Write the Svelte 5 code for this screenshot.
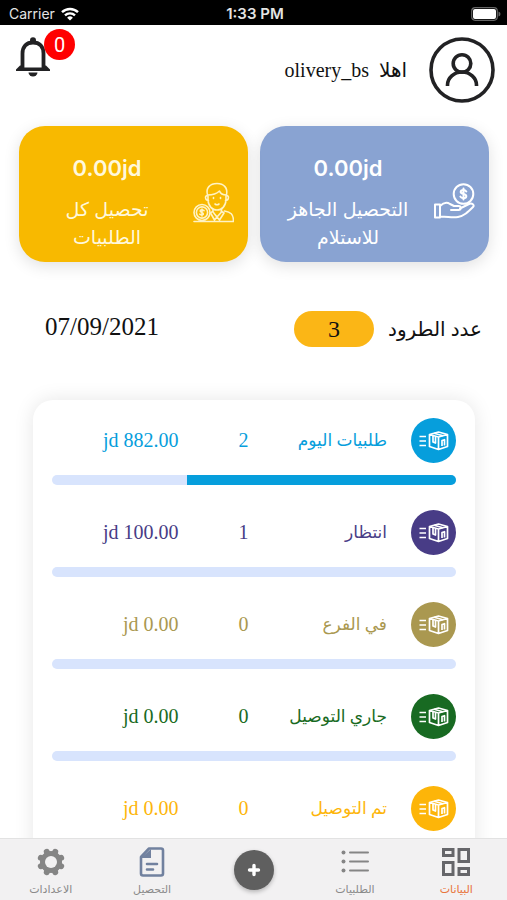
<script lang="ts">
	type Status = {
		label: string;
		count: number;
		amount: string;
		percent: number;
		color: string;
	};

	let username = 'olivery_bs';
	let date = '07/09/2021';
	let notifications = 0;
	let parcels = 3;

	let statuses: Status[] = [
		{ label: 'طلبيات اليوم', count: 2, amount: '882.00', percent: 66.7, color: '#069edc' },
		{ label: 'انتظار', count: 1, amount: '100.00', percent: 0, color: '#483c86' },
		{ label: 'في الفرع', count: 0, amount: '0.00', percent: 0, color: '#aa9850' },
		{ label: 'جاري التوصيل', count: 0, amount: '0.00', percent: 0, color: '#186a22' },
		{ label: 'تم التوصيل', count: 0, amount: '0.00', percent: 0, color: '#fdb509' }
	];
</script>

<div class="app" dir="rtl">
	<div class="status-bar" dir="ltr">
		<span class="carrier">
			Carrier
			<svg width="18" height="14" viewBox="0 0 18 14" fill="none" stroke="#fff" stroke-width="2.4">
				<path d="M1 5.2a11.5 11.5 0 0 1 16 0M4 8.4a7.3 7.3 0 0 1 10 0" />
				<path d="M9 13.6 6.1 10.7a4.2 4.2 0 0 1 5.8 0z" fill="#fff" stroke="none" />
			</svg>
		</span>
		<span class="clock">1:33 PM</span>
		<svg class="battery" width="30" height="14" viewBox="0 0 30 14">
			<rect x="0.7" y="0.7" width="25.6" height="12.6" rx="3.5" fill="none" stroke="#666" stroke-width="1.2" />
			<rect x="2" y="2" width="23" height="10" rx="2" fill="#fff" />
			<path d="M27.5 4.5q2 .5 2 2.5t-2 2.5z" fill="#666" />
		</svg>
	</div>

	<main>
		<header>
			<a class="profile" href="#profile">
				<svg width="66" height="66" viewBox="0 0 66 66" fill="none" stroke="#222224" stroke-width="3.6">
					<circle cx="33" cy="33" r="31" />
					<circle cx="33" cy="26.5" r="8.8" />
					<path d="M18.5 49v-1a14.5 13 0 0 1 29 0v1" />
				</svg>
				<span>اهلا</span>
				<span>{username}</span>
			</a>
			<button class="bell" aria-label="الاشعارات">
				<svg width="34" height="40" viewBox="0 0 34 40">
					<path
						d="M6.5 31V16.5C6.5 9.5 10.5 5.5 17 5.5s10.5 4 10.5 11V31"
						fill="none"
						stroke="#222224"
						stroke-width="3.8"
					/>
					<circle cx="17" cy="3.2" r="3" fill="#222224" />
					<path d="M0 34v-1.5l4-4h3v2h20v-2h3l4 4V34z" fill="#222224" />
					<path d="M12.5 35.500h9a4.5 4 0 0 1-9 0z" fill="#222224" />
				</svg>
				<span class="badge">{notifications}</span>
			</button>
		</header>

		<section class="cards">
			<a class="card ready" href="#ready">
				<svg width="41" height="41" viewBox="0 0 41 41" fill="none" stroke="#fff" stroke-width="2" stroke-linejoin="round" stroke-linecap="round">
					<circle cx="29.5" cy="12" r="9.8" />
					<path d="M32.3 9.5q-1-1.600-2.800-1.600-2.800 0-2.800 2c0 2.800 5.600 1.500 5.600 4.300q0 2-2.900 2-2.200 0-3-1.600M29.500 6.500v11" />
					<path d="M1 22.500h5v13H1zM6 24c3-3 7-4 10-2l4 2h4.500c3 0 3 4 0 4H17M26 26.500l9-4.500c3-1.500 6 1 4 3-5 5-9 9-15 10-6 1-10-.5-18-.5" />
				</svg>
				<div class="card-text">
					<strong>0.00jd</strong>
					<span>التحصيل الجاهز للاستلام</span>
				</div>
			</a>
			<a class="card total" href="#total">
				<svg width="41" height="41" viewBox="0 0 41 41" fill="none" stroke="#fff3c4" stroke-width="1.6" stroke-linejoin="round" stroke-linecap="round">
					<path d="M14.5 13C12.5 6 17 1.500 24 1.500S35 6 33.500 13M14.500 13c5 0 9-1 12-4 1 3 3 4 7 4M15 14v3c0 7 4 11 9 11s9-4 9-11v-3M14.500 13.500c-3 0-2.500 5 1 5M33.500 13.500c3 0 2.500 5-1 5" />
					<path d="M20.500 15.500v1M27.500 15.500v1M22 22q2 1.500 4 0" />
					<path d="M20 27v3l4 5 4.500-5v-3M20 29l-2.500 2 4 7 2.500-3 2.500 3 4.500-7-3-2M31.500 29c6 1 9 3 9 10.500H1" />
					<circle cx="9" cy="30.500" r="8" />
					<circle cx="9" cy="30.500" r="5.600" />
					<path d="M11 28.700q-2-1.700-3.500-.5c-1.500 2 3.500 2 2.800 4q-1.300 1.600-3.500 0M9 27v7" />
				</svg>
				<div class="card-text">
					<strong>0.00jd</strong>
					<span>تحصيل كل الطلبيات</span>
				</div>
			</a>
		</section>

		<section class="summary">
			<h2>عدد الطرود</h2>
			<span class="pill">{parcels}</span>
			<time>{date}</time>
		</section>

		<section class="panel">
			{#each statuses as status}
				<div class="status" style:color={status.color}>
					<div class="row">
						<svg width="45" height="45" viewBox="0 0 45 45" fill="none" stroke="#fff" stroke-width="1.7" stroke-linejoin="round">
							<circle cx="22.5" cy="22.5" r="22.5" fill="currentColor" stroke="none" />
							<path d="M8.5 18.500h6.500M8.500 23h6.500M8.500 27.500h6.500" stroke-width="1.5" />
							<path d="m18.500 16.500 9-2.500 9 2.500V28.500l-9 3-9-3zM18.500 16.500l9 2.500 9-2.500M27.500 19v12.500" />
							<path d="M22 18v6l2.500 1v-6.500M31 28v-5.500l2.500-.8V27.500M23 15.200l9 2.500" />
						</svg>
						<span class="label">{status.label}</span>
						<span class="count">{status.count}</span>
						<span class="amount"><bdi dir="ltr">jd {status.amount}</bdi></span>
					</div>
					<div class="track">
						<div class="fill" style:width="{status.percent}%"></div>
					</div>
				</div>
			{/each}
		</section>
	</main>

	<nav>
		<a class="active" href="#data">
			<svg width="30" height="30" viewBox="0 0 30 30" fill="none" stroke="#66666a" stroke-width="3">
				<path d="M2.500 2.500h9.500v6H2.500zM18 2.500h9.500v12H18zM2.500 15.500h9.500v12H2.500zM18 21.500h9.500v6H18z" />
			</svg>
			<span>البيانات</span>
		</a>
		<a href="#orders">
			<svg width="30" height="30" viewBox="0 0 30 30" fill="#858585">
				<circle cx="3.5" cy="5.5" r="2" />
				<circle cx="3.5" cy="14.5" r="2" />
				<circle cx="3.5" cy="23.5" r="2" />
				<path d="M10 5.500h18M10 14.500h18M10 23.500h18" stroke="#858585" stroke-width="2" stroke-linecap="round" />
			</svg>
			<span>الطلبيات</span>
		</a>
		<button class="add" aria-label="اضافة">
			<svg width="40" height="40" viewBox="0 0 40 40">
				<path d="M20 15.500v9M15.500 20h9" stroke="#fff" stroke-width="3.4" stroke-linecap="round" />
			</svg>
		</button>
		<a href="#collect">
			<svg width="30" height="30" viewBox="0 0 30 30" fill="none" stroke="#71819f" stroke-width="2.6" stroke-linejoin="round">
				<path d="M12 1.500h12a2 2 0 0 1 2 2v23a2 2 0 0 1-2 2H6a2 2 0 0 1-2-2V10z" />
				<path d="M14 2v9H4z" fill="#71819f" stroke="none" />
				<path d="M10 17h10M10 22.500h6" stroke-linecap="round" />
			</svg>
			<span>التحصيل</span>
		</a>
		<a href="#settings">
			<svg width="30" height="30" viewBox="0 0 30 30">
				<g stroke="#858585" stroke-width="6" stroke-linecap="round">
					<path d="M15 4v22M4 15h22" transform="rotate(22.5 15 15)" />
					<path d="M15 4v22M4 15h22" transform="rotate(67.5 15 15)" />
				</g>
				<circle cx="15" cy="15" r="11" fill="#858585" />
				<circle cx="15" cy="15" r="6" fill="#f2f1f2" />
			</svg>
			<span>الاعدادات</span>
		</a>
	</nav>
</div>

<style>
	:global(body) {
		margin: 0;
		background: #fff;
	}

	.app {
		display: flex;
		flex-direction: column;
		height: 100vh;
		overflow: hidden;
		font-family: 'Liberation Serif', 'DejaVu Sans', serif;
		color: #111;
	}

	a {
		color: inherit;
		text-decoration: none;
	}

	button {
		padding: 0;
		border: 0;
		background: none;
		font: inherit;
	}

	svg {
		display: block;
		flex: none;
	}

	.status-bar {
		display: grid;
		grid-template-columns: 1fr auto 1fr;
		align-items: center;
		flex: none;
		height: 25px;
		padding: 2px 6px 0 9px;
		box-sizing: border-box;
		background: #000;
		color: #e4e4e4;
		font-family: Inter, sans-serif;
		font-size: 14px;
	}

	.carrier {
		display: flex;
		align-items: center;
		gap: 6px;
	}

	.clock {
		font-size: 15px;
		font-weight: 600;
	}

	.battery {
		justify-self: end;
	}

	main {
		flex: 1;
		min-height: 0;
		overflow: hidden;
	}

	header {
		display: flex;
		justify-content: space-between;
		align-items: flex-start;
		padding: 12px 12px 0 16px;
	}

	.profile {
		display: flex;
		align-items: center;
		gap: 10px;
		font-size: 20px;
	}

	.profile svg {
		margin-left: 12px;
	}

	.bell {
		position: relative;
	}

	.badge {
		position: absolute;
		top: -8px;
		left: 28px;
		width: 31px;
		height: 31px;
		border-radius: 50%;
		background: #f00;
		color: #fff;
		font-family: Roboto, sans-serif;
		font-size: 20px;
		line-height: 33px;
		text-align: center;
	}

	.cards {
		display: grid;
		grid-template-columns: 1fr 1fr;
		gap: 12px;
		padding: 23px 18px 0 19px;
	}

	.card {
		display: flex;
		align-items: center;
		gap: 4px;
		height: 136px;
		padding: 0 14px 0 6px;
		box-sizing: border-box;
		border-radius: 26px;
		box-shadow: 0 4px 16px rgba(0, 0, 0, 0.12);
		color: #fff;
	}

	.card svg {
		margin-top: 16px;
	}

	.ready {
		background: #89a3d2;
	}

	.total {
		background: #f8b900;
		color: #fff8dc;
	}

	.card-text {
		display: flex;
		flex-direction: column;
		flex: 1;
		align-items: center;
		gap: 14px;
		padding-top: 18px;
		text-align: center;
		font-family: Inter, 'DejaVu Sans', sans-serif;
	}

	.card-text strong {
		font-size: 22px;
		font-weight: 600;
		line-height: 28px;
	}

	.card-text span {
		max-width: 130px;
		font-size: 19px;
		line-height: 28px;
	}

	.summary {
		display: flex;
		align-items: center;
		padding: 49px 25px 0 45px;
	}

	h2 {
		margin: 0 0 0 14px;
		font-size: 20px;
		font-weight: 400;
		line-height: 36px;
	}

	.pill {
		width: 80px;
		border-radius: 18px;
		background: #fbb616;
		font-size: 24px;
		line-height: 36px;
		text-align: center;
	}

	time {
		align-self: flex-start;
		margin-right: auto;
		font-size: 25px;
		line-height: 32px;
	}

	.panel {
		display: flex;
		flex-direction: column;
		gap: 25px;
		margin: 53px 32px 0 33px;
		padding: 18px 19px 25px;
		border-radius: 20px;
		box-shadow: 0 0 20px rgba(0, 0, 0, 0.1);
	}

	.row {
		display: grid;
		grid-template-columns: 69px 5fr 2fr 7fr;
		align-items: center;
		height: 45px;
		font-size: 20px;
		white-space: nowrap;
	}

	.label {
		font-size: 17px;
	}

	.count {
		text-align: center;
	}

	.amount {
		padding-right: 41px;
	}

	.track {
		height: 10px;
		margin-top: 12px;
		border-radius: 5px;
		overflow: hidden;
		background: #d8e4fd;
	}

	.fill {
		height: 100%;
		background: currentColor;
	}

	nav {
		display: grid;
		grid-template-columns: repeat(5, 1fr);
		align-items: center;
		justify-items: center;
		flex: none;
		height: 62px;
		box-sizing: border-box;
		border-top: 1px solid #e2e2e2;
		background: #f2f1f2;
		color: #8a8a8a;
		font-size: 11px;
	}

	nav a {
		display: flex;
		flex-direction: column;
		align-items: center;
		gap: 4px;
		padding-top: 4px;
		line-height: 16px;
	}

	nav a.active {
		color: #e8743c;
	}

	.add {
		border-radius: 50%;
		background: #5f5f5f;
		box-shadow: 0 2px 4px rgba(0, 0, 0, 0.25);
	}
</style>
